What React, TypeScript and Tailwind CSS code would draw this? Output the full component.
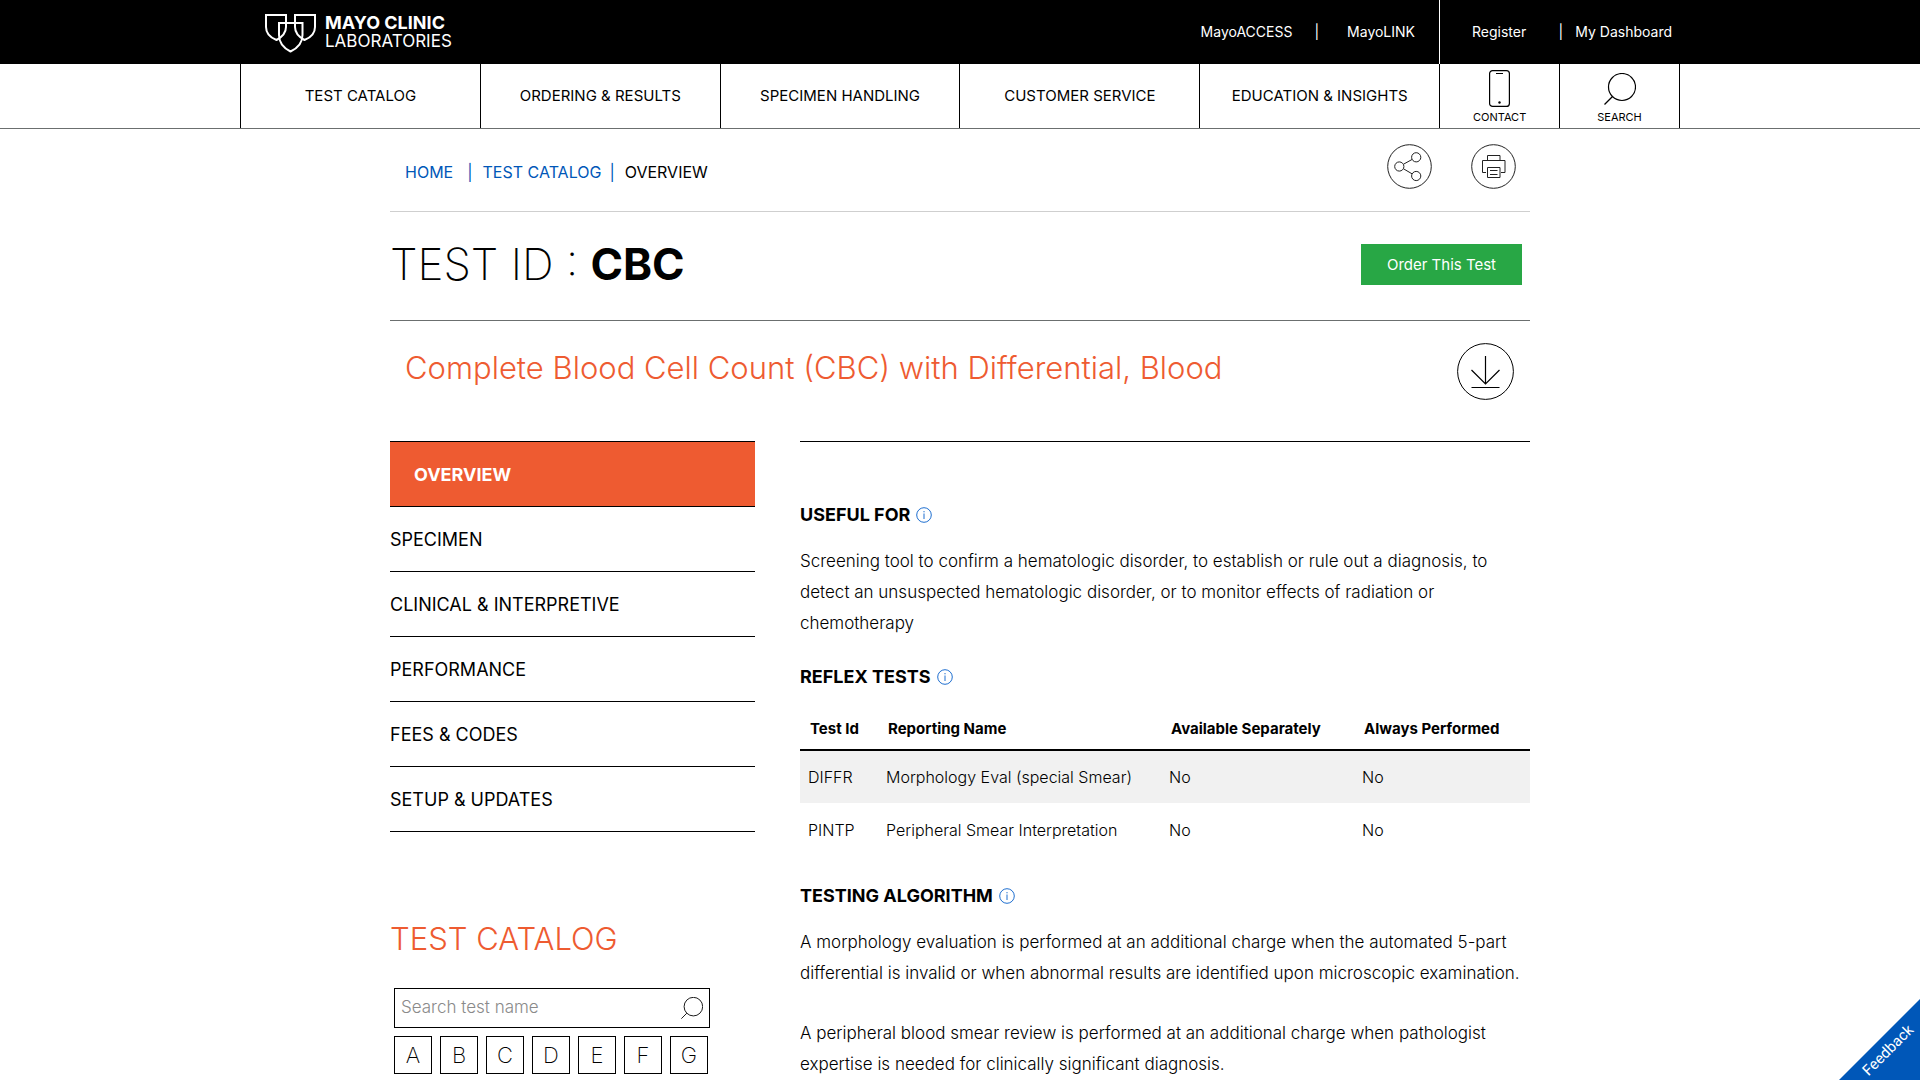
import type { ReactNode } from 'react';

const navItems = ['TEST CATALOG', 'ORDERING & RESULTS', 'SPECIMEN HANDLING', 'CUSTOMER SERVICE', 'EDUCATION & INSIGHTS'];
const sideItems = ['SPECIMEN', 'CLINICAL & INTERPRETIVE', 'PERFORMANCE', 'FEES & CODES', 'SETUP & UPDATES'];
const letters = ['A', 'B', 'C', 'D', 'E', 'F', 'G'];
const columns = ['Test Id', 'Reporting Name', 'Available Separately', 'Always Performed'];
const rows = [
  ['DIFFR', 'Morphology Eval (special Smear)', 'No', 'No'],
  ['PINTP', 'Peripheral Smear Interpretation', 'No', 'No'],
];

function Logo() {
  return (
    <svg width="52" height="40" viewBox="0 0 52 40" fill="none" stroke="white" strokeWidth="2" className="mt-1" aria-hidden="true">
      <path d="M1 1h20v12c0 5.500-4 10-9.500 13C5 23.500 1 19.500 1 13z" />
      <path d="M30 1h20v12c0 6.500-4 10.500-10.500 13C34 23 30 18.500 30 13z" />
      <path d="M14 9h23.500v12c0 8-4.500 13-12 16.500C18.500 34 14 29 14 21z" />
    </svg>
  );
}

function PhoneIcon() {
  return (
    <svg width="21" height="37" viewBox="0 0 21 37" fill="none" stroke="black" aria-hidden="true">
      <rect x="0.600" y="0.600" width="19.800" height="35.800" rx="3" strokeWidth="1.200" />
      <path d="M7 3.500h7" />
      <circle cx="10.500" cy="32.500" r="1.200" fill="black" stroke="none" />
    </svg>
  );
}

function SearchIcon({ size, stroke }: { size: number; stroke: number }) {
  return (
    <svg width={size} height={size} viewBox="0 0 32 32" fill="none" stroke="black" strokeWidth={stroke} aria-hidden="true">
      <circle cx="18" cy="14" r="13.500" />
      <path d="M8.500 23.500L0.500 31.500" />
    </svg>
  );
}

function ShareIcon() {
  return (
    <svg width="45" height="45" viewBox="0 0 45 45" fill="none" stroke="#222" aria-hidden="true">
      <circle cx="22.500" cy="22.500" r="21.800" />
      <circle cx="12.300" cy="22.500" r="4.600" />
      <circle cx="29.200" cy="13.300" r="4.600" />
      <circle cx="29.200" cy="32" r="4.600" />
      <path d="M16.500 20.200L25 15.500M16.500 24.800L25 29.800" />
    </svg>
  );
}

function PrintIcon() {
  return (
    <svg width="45" height="45" viewBox="0 0 45 45" fill="none" stroke="#222" aria-hidden="true">
      <circle cx="22.500" cy="22.500" r="21.800" />
      <path d="M16.500 16.500v-5h12.500v5M15 28.500h-3.500v-12h22.500v12h-4M16.500 23.500h12.500v10h-12.500zM19 26.500h7.500M19 30.500h7.500" />
    </svg>
  );
}

function DownloadIcon() {
  return (
    <svg width="57" height="57" viewBox="0 0 57 57" fill="none" stroke="black" aria-hidden="true">
      <circle cx="28.500" cy="28.500" r="27.900" />
      <path d="M28.500 13v28M14.500 27l14 14l14-14M14.500 44.500h28" strokeWidth="1.200" />
    </svg>
  );
}

function SectionTitle({ children }: { children: ReactNode }) {
  return (
    <h3 className="flex items-center gap-1.5 text-lg leading-6 font-bold">
      {children}
      <button type="button" aria-label="Information">
        <svg width="16" height="16" viewBox="0 0 16 16" fill="none" stroke="#1f6fd0" aria-hidden="true">
          <circle cx="8" cy="8" r="7.300" />
          <path d="M8 6.500v5.500M8 4v1.300" />
        </svg>
      </button>
    </h3>
  );
}

export default function App() {
  return (
    <div className="h-screen overflow-hidden bg-white font-['Inter',sans-serif] text-black">
      <header>
        <div className="bg-black text-white">
          <div className="mx-auto flex h-16 max-w-[1440px] items-center text-sm">
            <a href="#" className="ml-[25px] flex items-center gap-2">
              <Logo />
              <span className="flex flex-col text-lg leading-[18px]">
                <b>MAYO CLINIC</b>
                <span className="text-[17px] leading-[18px]">LABORATORIES</span>
              </span>
            </a>
            <div className="ml-auto flex h-full items-center gap-[22px] pr-6">
              <a href="#">MayoACCESS</a>
              <span>|</span>
              <a href="#" className="pl-1.5">MayoLINK</a>
            </div>
            <div className="flex h-full w-[241px] items-center border-l border-white pr-2 pl-8">
              <a href="#">Register</a>
              <span className="ml-auto pr-3">|</span>
              <a href="#">My Dashboard</a>
            </div>
          </div>
        </div>
        <nav className="border-b border-[#6b6f6f]">
          <div className="mx-auto grid h-16 max-w-[1440px] grid-cols-12 border-r border-black text-[15px]">
            {navItems.map((item) => (
              <a key={item} href="#" className="col-span-2 flex items-center justify-center border-l border-black">
                {item}
              </a>
            ))}
            <a href="#" className="flex flex-col items-center justify-end gap-0.5 border-l border-black pb-[3px] text-[11px] leading-4">
              <PhoneIcon />
              CONTACT
            </a>
            <button type="button" className="flex flex-col items-center justify-end gap-1 border-l border-black pb-[3px] text-[11px] leading-4">
              <SearchIcon size={32} stroke={1.2} />
              SEARCH
            </button>
          </div>
        </nav>
      </header>

      <main className="mx-auto max-w-[1140px]">
        <div className="flex h-[83px] items-start justify-between border-b border-[#cfcfcf] pr-3.5 pl-[15px]">
          <nav aria-label="Breadcrumb" className="mt-[31px] flex leading-6 text-[#0057b8]">
            <a href="#">HOME</a>
            <span className="pr-2.5 pl-3.5">|</span>
            <a href="#">TEST CATALOG</a>
            <span className="pr-2.5 pl-2">|</span>
            <span className="text-black">OVERVIEW</span>
          </nav>
          <div className="mt-[15px] flex gap-[39px]">
            <button type="button" aria-label="Share"><ShareIcon /></button>
            <button type="button" aria-label="Print"><PrintIcon /></button>
          </div>
        </div>

        <div className="flex h-[109px] items-center justify-between border-b border-[#6b6f6f] pr-2 pb-1">
          <h1 className="text-[44px] font-extralight">
            TEST ID : <b className="font-bold">CBC</b>
          </h1>
          <button type="button" className="h-[41px] w-[161px] bg-[#28a745] pt-0.5 text-[15px] text-white">Order This Test</button>
        </div>

        <div className="flex h-[120px] items-start justify-between pt-[22px] pr-4 pl-[15px]">
          <h2 className="mt-[3px] text-[31px] leading-[44px] font-light text-[#ee5b31]">
            Complete Blood Cell Count (CBC) with Differential, Blood
          </h2>
          <button type="button" aria-label="Download"><DownloadIcon /></button>
        </div>

        <div className="flex justify-between gap-[45px]">
          <aside className="flex-1">
            <ul className="border-t border-black text-lg">
              <li className="border-b border-black">
                <a href="#" className="flex h-16 items-center bg-[#ee5b31] px-6 pt-0.5 font-bold text-white">OVERVIEW</a>
              </li>
              {sideItems.map((item) => (
                <li key={item} className="border-b border-black">
                  <a href="#" className="flex h-16 items-center pt-0.5">{item}</a>
                </li>
              ))}
            </ul>
            <h2 className="mt-[84px] text-[31px] leading-[46px] font-light text-[#ee5b31]">TEST CATALOG</h2>
            <form className="mt-[26px] ml-1 flex h-10 w-[316px] items-center border border-black px-1.5">
              <input
                type="text"
                aria-label="Search test name"
                placeholder="Search test name"
                className="min-w-0 flex-1 text-[17px] font-light outline-none placeholder:text-[#8a8a8a]"
              />
              <button type="button" aria-label="Search"><SearchIcon size={22} stroke={1.3} /></button>
            </form>
            <div className="mt-2 ml-1 flex gap-2">
              {letters.map((letter) => (
                <a key={letter} href="#" className="flex size-[38px] items-center justify-center border border-black text-[22px] font-extralight">
                  {letter}
                </a>
              ))}
            </div>
          </aside>

          <section className="w-[730px] border-t border-black pt-[61px]">
            <SectionTitle>USEFUL FOR</SectionTitle>
            <p className="mt-[19px] text-[17px] leading-[31px] font-light">
              Screening tool to confirm a hematologic disorder, to establish or rule out a diagnosis, to
              <br />
              detect an unsuspected hematologic disorder, or to monitor effects of radiation or
              <br />
              chemotherapy
            </p>
            <div className="mt-[26px]">
              <SectionTitle>REFLEX TESTS</SectionTitle>
            </div>
            <table className="mt-5 w-full table-fixed text-left">
              <colgroup>
                <col className="w-[78px]" />
                <col className="w-[283px]" />
                <col className="w-[193px]" />
                <col />
              </colgroup>
              <thead>
                <tr className="h-[41px] border-b-2 border-black text-[15px]">
                  {columns.map((head) => (
                    <th key={head} className="pl-2.5 font-bold whitespace-nowrap">{head}</th>
                  ))}
                </tr>
              </thead>
              <tbody>
                {rows.map((row) => (
                  <tr key={row[0]} className="h-[53px] odd:bg-[#f1f1f1]">
                    {row.map((cell, i) => (
                      <td key={columns[i]} className="pl-2 font-light whitespace-nowrap">{cell}</td>
                    ))}
                  </tr>
                ))}
              </tbody>
            </table>
            <div className="mt-7">
              <SectionTitle>TESTING ALGORITHM</SectionTitle>
            </div>
            <p className="mt-[19px] text-[17px] leading-[31px] font-light">
              A morphology evaluation is performed at an additional charge when the automated 5-part
              <br />
              differential is invalid or when abnormal results are identified upon microscopic examination.
            </p>
            <p className="mt-[29px] text-[17px] leading-[31px] font-light">
              A peripheral blood smear review is performed at an additional charge when pathologist
              <br />
              expertise is needed for clinically significant diagnosis.
            </p>
          </section>
        </div>
      </main>

      <button type="button" className="fixed right-0 bottom-0 size-[81px] bg-[#0057b8] text-white [clip-path:polygon(100%_0,100%_100%,0_100%)]">
        <span className="absolute right-0.5 bottom-5 block w-[62px] -rotate-45 text-center font-['Roboto',sans-serif] text-[15px] leading-[18px]">Feedback</span>
      </button>
    </div>
  );
}
